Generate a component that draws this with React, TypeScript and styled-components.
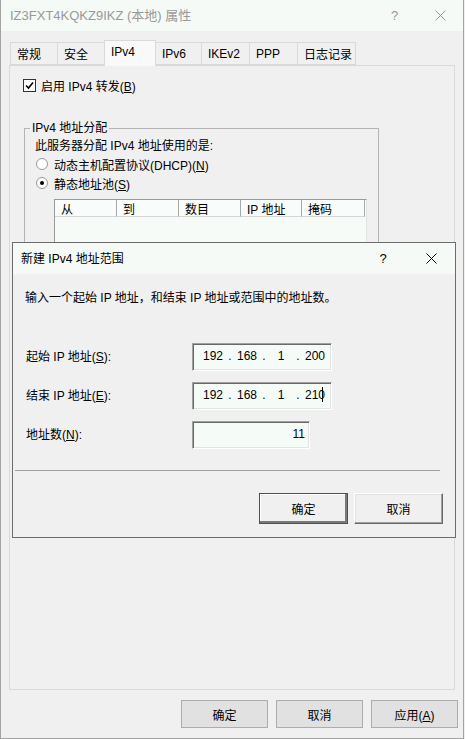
import React from 'react'
import styled, { createGlobalStyle } from 'styled-components'

const GlobalStyle = createGlobalStyle`
  * { box-sizing: border-box; }
  html, body {
    margin: 0;
    padding: 0;
    background: #f0f0f0;
  }
  body {
    font-family: "Liberation Sans", "Noto Sans CJK SC", sans-serif;
    font-size: 12px;
    color: #000;
  }
`

const Window = styled.div`
  position: relative;
  width: 464px;
  height: 739px;
  border: 1px solid #a3a3a3;
  border-top: none;
  background: #f0f0f0;
  display: flex;
  flex-direction: column;
  overflow: hidden;
`

const TitleBar = styled.div<{ $active?: boolean }>`
  height: 31px;
  flex: none;
  display: flex;
  align-items: center;
  background: #f5faf7;
  color: ${(p) => (p.$active ? '#000' : '#999')};
  padding-left: ${(p) => (p.$active ? 8 : 9)}px;
`

const TitleText = styled.div<{ $size?: number }>`
  flex: 1;
  font-size: ${(p) => p.$size ?? 12}px;
  line-height: 16px;
  white-space: nowrap;
`

const CaptionButton = styled.div<{ $w?: number }>`
  width: ${(p) => p.$w ?? 45}px;
  height: 31px;
  display: flex;
  align-items: center;
  justify-content: center;
  font-size: 13px;
`

const Body = styled.div`
  flex: 1;
  display: flex;
  flex-direction: column;
  padding: 9px 5px 0 8px;
`

const TabStrip = styled.div`
  display: flex;
  align-items: flex-end;
  height: 26px;
  margin-bottom: -1px;
  padding-left: 1px;
  position: relative;
  z-index: 1;
`

const Tab = styled.div<{ $w: number; $selected?: boolean }>`
  width: ${(p) => p.$w}px;
  height: ${(p) => (p.$selected ? 26 : 23)}px;
  margin-bottom: ${(p) => (p.$selected ? 0 : 1)}px;
  margin-left: -1px;
  &:first-child { margin-left: 0; }
  border: 1px solid #d9d9d9;
  border-bottom: ${(p) => (p.$selected ? 'none' : '1px solid #d9d9d9')};
  background: ${(p) => (p.$selected ? '#f9f9f9' : '#f0f0f0')};
  position: relative;
  z-index: ${(p) => (p.$selected ? 2 : 1)};
  display: flex;
  align-items: center;
  padding: 0 0 ${(p) => (p.$selected ? 3 : 0)}px 6px;
  white-space: nowrap;
`

const Panel = styled.div`
  width: 446px;
  height: 625px;
  flex: none;
  border: 1px solid #d9d9d9;
  background: #f0f0f0;
  padding: 11px 13px;
  display: flex;
  flex-direction: column;
  align-items: flex-start;
`

const CheckRow = styled.label`
  display: flex;
  align-items: center;
  height: 16px;
  gap: 5px;
`

const CheckBox = styled.span`
  width: 13px;
  height: 13px;
  border: 1px solid #333;
  background: #fff;
  display: flex;
  align-items: center;
  justify-content: center;
`

const GroupBox = styled.fieldset`
  margin: 27px 0 0 1px;
  width: 355px;
  height: 340px;
  border: 1px solid #b4b4b4;
  padding: 0 10px 10px;
  display: flex;
  flex-direction: column;
  align-items: flex-start;
`

const Legend = styled.legend`
  padding: 0 2px;
  margin-left: -5px;
  line-height: 16px;
`

const Line = styled.div<{ $mt?: number }>`
  line-height: 16px;
  margin-top: ${(p) => p.$mt ?? 0}px;
  white-space: nowrap;
`

const RadioRow = styled.div<{ $mt: number }>`
  display: flex;
  align-items: center;
  height: 16px;
  margin-top: ${(p) => p.$mt}px;
  padding-left: 1px;
  gap: 6px;
`

const Radio = styled.span<{ $checked?: boolean }>`
  width: 12px;
  height: 12px;
  border-radius: 50%;
  border: 1px solid #9a9a9a;
  background: #fff;
  display: flex;
  align-items: center;
  justify-content: center;
  &::after {
    content: '';
    width: 4px;
    height: 4px;
    border-radius: 50%;
    background: ${(p) => (p.$checked ? '#000' : 'transparent')};
  }
`

const ListView = styled.div`
  margin: 8px 0 0 19px;
  width: 313px;
  height: 150px;
  border: 1px solid #9a9a9a;
  border-right-color: #e3e3e3;
  border-bottom-color: #e3e3e3;
  background: #f6fbf8;
`

const ListHeader = styled.div`
  display: flex;
  height: 17px;
  background: #f8fcfa;
`

const HeaderCell = styled.div<{ $w: number }>`
  width: ${(p) => p.$w}px;
  border-right: 1px solid #a8a8a8;
  border-bottom: 1px solid #d6d6d6;
  padding-left: 6px;
  display: flex;
  align-items: center;
  white-space: nowrap;
`

const ButtonRow = styled.div`
  display: flex;
  justify-content: flex-end;
  gap: 8px;
  margin-top: 10px;
`

const FlatButton = styled.button`
  width: 87px;
  height: 28px;
  border: 1px solid #adadad;
  background: #e1e1e1;
  font: inherit;
  color: #000;
  padding: 0;
`

const Dialog = styled.div`
  position: absolute;
  left: 11px;
  top: 242px;
  width: 444px;
  height: 296px;
  border: 1px solid #6c6c6c;
  background: #f0f0f0;
  display: flex;
  flex-direction: column;
  z-index: 5;
`

const DialogBody = styled.div`
  padding: 16px 12px 0;
  display: flex;
  flex-direction: column;
`

const Form = styled.div`
  margin-top: 37px;
  display: grid;
  grid-template-columns: 167px auto;
  row-gap: 11px;
  align-items: center;
`

const FieldLabel = styled.div`
  padding-left: 1px;
  margin-top: -3px;
  white-space: nowrap;
`

const Field = styled.div<{ $w: number; $right?: boolean }>`
  width: ${(p) => p.$w}px;
  height: 28px;
  background: #f5fbf7;
  border: 1px solid;
  border-color: #a0a0a0 #fff #fff #a0a0a0;
  box-shadow: inset 1px 1px #696969, inset -1px -1px #e3e3e3;
  display: flex;
  align-items: center;
  justify-content: ${(p) => (p.$right ? 'flex-end' : 'flex-start')};
  padding: ${(p) => (p.$right ? '0 4px 3px 0' : '0 0 3px 8px')};
`

const Octet = styled.span`
  width: 24px;
  text-align: center;
`

const Dot = styled.span`
  width: 10px;
  text-align: center;
`

const Caret = styled.span`
  width: 1px;
  height: 15px;
  background: #000;
  margin-left: -5px;
`

const Separator = styled.div`
  margin: 21px 0 0 -10px;
  width: 425px;
  height: 1px;
  background: #a0a0a0;
`

const DialogButtons = styled.div`
  display: flex;
  justify-content: flex-end;
  gap: 6px;
  margin-top: 22px;
`

const ClassicButton = styled.button<{ $default?: boolean }>`
  width: 89px;
  height: 31px;
  padding: 0;
  font: inherit;
  color: #000;
  background: #f0f0f0;
  border: 1px solid;
  border-color: ${(p) => (p.$default ? '#505050' : '#fff #696969 #696969 #fff')};
  box-shadow: ${(p) =>
    p.$default
      ? 'inset -2px -2px #7a7a7a, inset 1px 1px #fff'
      : 'inset -1px -1px #a0a0a0, inset 1px 1px #e3e3e3'};
`

const CloseIcon = ({ color }: { color: string }) => (
  <svg width="11" height="11" viewBox="0 0 11 11">
    <path d="M0.5 0.5 L10.5 10.5 M10.5 0.5 L0.5 10.5" stroke={color} strokeWidth="1" fill="none" />
  </svg>
)

const tabs = [
  { label: '常规', w: 48 },
  { label: '安全', w: 48 },
  { label: 'IPv4', w: 52, selected: true },
  { label: 'IPv6', w: 47 },
  { label: 'IKEv2', w: 49 },
  { label: 'PPP', w: 49 },
  { label: '日志记录', w: 59 },
]

const columns = [
  { label: '从', w: 62 },
  { label: '到', w: 62 },
  { label: '数目', w: 62 },
  { label: 'IP 地址', w: 61 },
  { label: '掩码', w: 63 },
]

const IpValue = ({ parts, caret }: { parts: string[]; caret?: boolean }) => (
  <>
    {parts.map((p, i) => (
      <React.Fragment key={i}>
        {i > 0 && <Dot>.</Dot>}
        <Octet>{p}</Octet>
      </React.Fragment>
    ))}
    {caret && <Caret />}
  </>
)

export default function App() {
  return (
    <>
      <GlobalStyle />
      <Window>
        <TitleBar>
          <TitleText $size={13}>IZ3FXT4KQKZ9IKZ (本地) 属性</TitleText>
          <CaptionButton>?</CaptionButton>
          <CaptionButton $w={46}>
            <CloseIcon color="#999" />
          </CaptionButton>
        </TitleBar>
        <Body>
          <TabStrip>
            {tabs.map((t) => (
              <Tab key={t.label} $w={t.w} $selected={t.selected}>
                {t.label}
              </Tab>
            ))}
          </TabStrip>
          <Panel>
            <CheckRow>
              <CheckBox>
                <svg width="9" height="9" viewBox="0 0 9 9">
                  <path d="M1 4.5 L3.5 7 L8 1.5" stroke="#000" strokeWidth="1.6" fill="none" />
                </svg>
              </CheckBox>
              <span>
                启用 IPv4 转发(<u>B</u>)
              </span>
            </CheckRow>
            <GroupBox>
              <Legend>IPv4 地址分配</Legend>
              <Line $mt={2}>此服务器分配 IPv4 地址使用的是:</Line>
              <RadioRow $mt={2}>
                <Radio />
                <span>
                  动态主机配置协议(DHCP)(<u>N</u>)
                </span>
              </RadioRow>
              <RadioRow $mt={3}>
                <Radio $checked />
                <span>
                  静态地址池(<u>S</u>)
                </span>
              </RadioRow>
              <ListView>
                <ListHeader>
                  {columns.map((c) => (
                    <HeaderCell key={c.label} $w={c.w}>
                      {c.label}
                    </HeaderCell>
                  ))}
                </ListHeader>
              </ListView>
            </GroupBox>
          </Panel>
          <ButtonRow>
            <FlatButton>确定</FlatButton>
            <FlatButton>取消</FlatButton>
            <FlatButton>
              应用(<u>A</u>)
            </FlatButton>
          </ButtonRow>
        </Body>

        <Dialog>
          <TitleBar $active>
            <TitleText>新建 IPv4 地址范围</TitleText>
            <CaptionButton $w={48}>?</CaptionButton>
            <CaptionButton $w={48}>
              <CloseIcon color="#000" />
            </CaptionButton>
          </TitleBar>
          <DialogBody>
            <Line>输入一个起始 IP 地址，和结束 IP 地址或范围中的地址数。</Line>
            <Form>
              <FieldLabel>
                起始 IP 地址(<u>S</u>):
              </FieldLabel>
              <Field $w={140}>
                <IpValue parts={['192', '168', '1', '200']} />
              </Field>
              <FieldLabel>
                结束 IP 地址(<u>E</u>):
              </FieldLabel>
              <Field $w={140}>
                <IpValue parts={['192', '168', '1', '210']} caret />
              </Field>
              <FieldLabel>
                地址数(<u>N</u>):
              </FieldLabel>
              <Field $w={118} $right>
                11
              </Field>
            </Form>
            <Separator />
            <DialogButtons>
              <ClassicButton $default>确定</ClassicButton>
              <ClassicButton>取消</ClassicButton>
            </DialogButtons>
          </DialogBody>
        </Dialog>
      </Window>
    </>
  )
}
